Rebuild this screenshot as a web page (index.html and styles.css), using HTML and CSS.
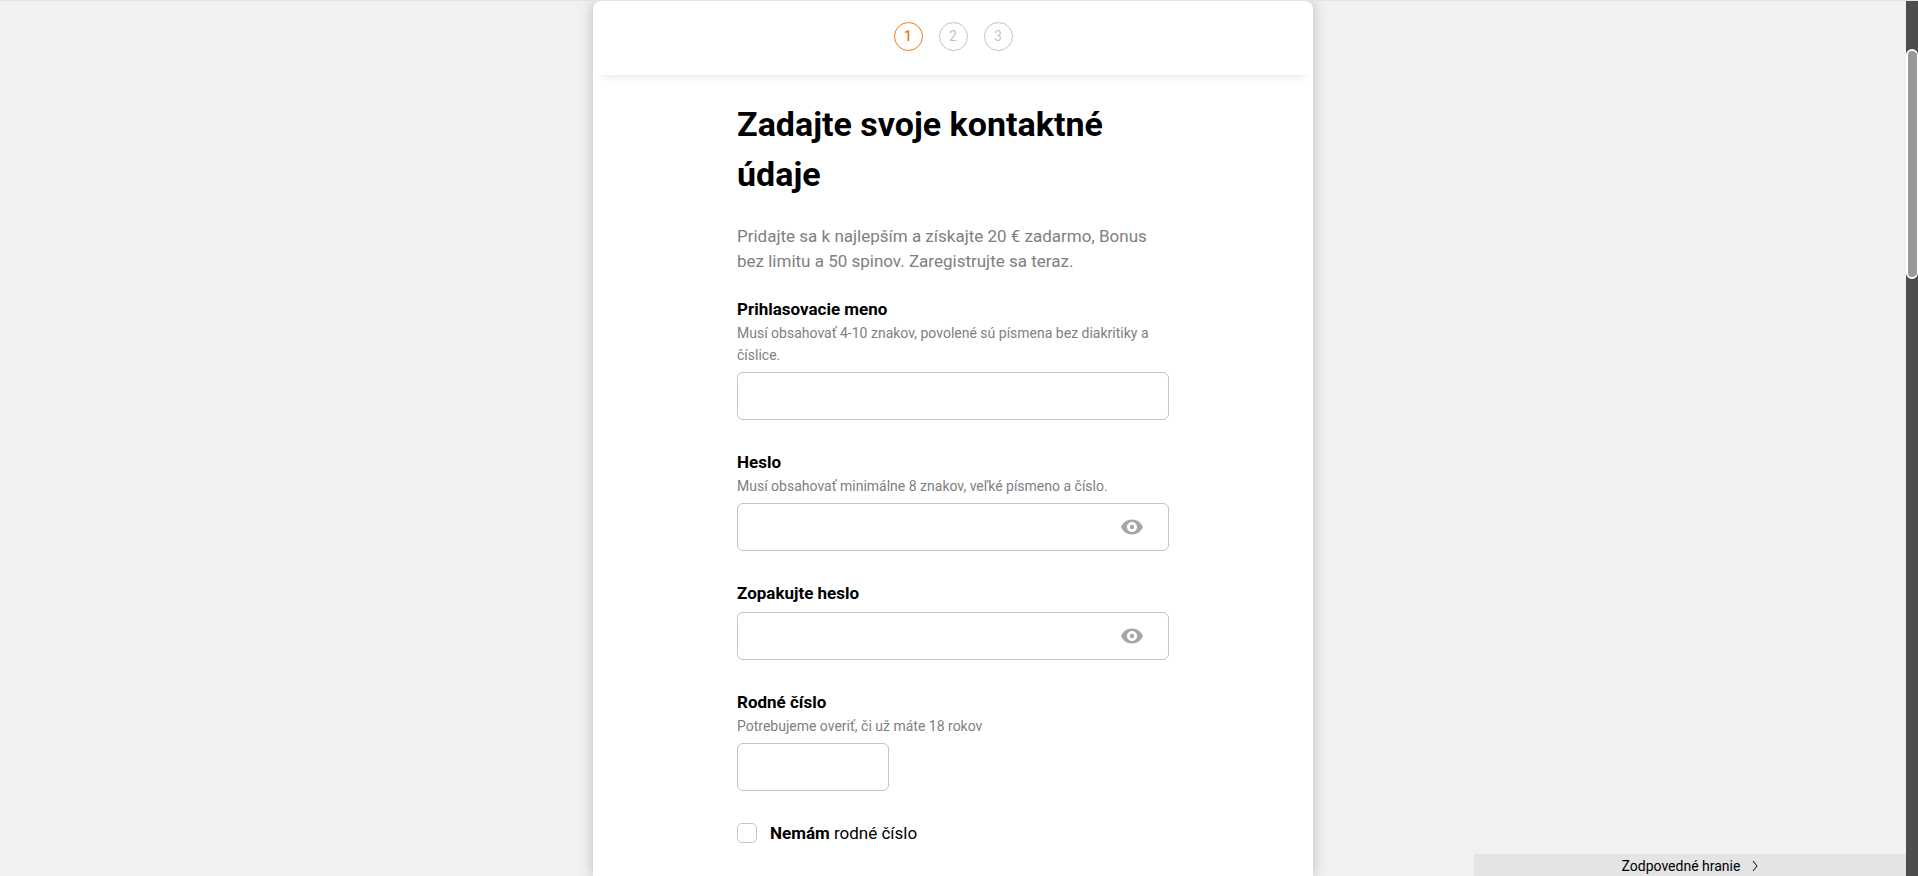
FILE: index.html
```html
<!DOCTYPE html>
<html lang="sk">
<head>
    <meta charset="UTF-8">
    <meta name="viewport" content="width=device-width, initial-scale=1.0">
    <title>Registrácia</title>
    <link rel="stylesheet" href="styles.css">
</head>
<body>

    <div class="page">
        <main class="content">
            <div class="card">
                <ol class="steps">
                    <li class="step active">1</li>
                    <li class="step">2</li>
                    <li class="step">3</li>
                </ol>

                <form class="form">
                    <h1>Zadajte svoje kontaktné údaje</h1>
                    <p class="intro">Pridajte sa k najlepším a získajte 20 € zadarmo, Bonus bez limitu a 50 spinov. Zaregistrujte sa teraz.</p>

                    <div class="field">
                        <label for="username">Prihlasovacie meno</label>
                        <p class="hint" id="username-hint">Musí obsahovať 4-10 znakov, povolené sú písmena bez diakritiky a číslice.</p>
                        <input type="text" class="input" id="username" aria-describedby="username-hint">
                    </div>

                    <div class="field">
                        <label for="password">Heslo</label>
                        <p class="hint" id="password-hint">Musí obsahovať minimálne 8 znakov, veľké písmeno a číslo.</p>
                        <div class="password">
                            <input type="password" class="input" id="password" aria-describedby="password-hint">
                            <button type="button" class="eye" aria-label="Zobraziť heslo">
                                <svg width="24" height="24" viewBox="0 0 24 24"><path d="M12 4.5C7 4.5 2.73 7.61 1 12c1.73 4.39 6 7.5 11 7.5s9.27-3.11 11-7.5c-1.73-4.39-6-7.5-11-7.5zM12 17c-2.76 0-5-2.24-5-5s2.24-5 5-5 5 2.24 5 5-2.24 5-5 5zm0-7.2a2.2 2.2 0 1 0 0 4.4 2.2 2.2 0 0 0 0-4.4z"/></svg>
                            </button>
                        </div>
                    </div>

                    <div class="field">
                        <label for="password2">Zopakujte heslo</label>
                        <div class="password">
                            <input type="password" class="input" id="password2">
                            <button type="button" class="eye" aria-label="Zobraziť heslo">
                                <svg width="24" height="24" viewBox="0 0 24 24"><path d="M12 4.5C7 4.5 2.73 7.61 1 12c1.73 4.39 6 7.5 11 7.5s9.27-3.11 11-7.5c-1.73-4.39-6-7.5-11-7.5zM12 17c-2.76 0-5-2.24-5-5s2.24-5 5-5 5 2.24 5 5-2.24 5-5 5zm0-7.2a2.2 2.2 0 1 0 0 4.4 2.2 2.2 0 0 0 0-4.4z"/></svg>
                            </button>
                        </div>
                    </div>

                    <div class="field">
                        <label for="birth-number">Rodné číslo</label>
                        <p class="hint" id="birth-hint">Potrebujeme overiť, či už máte 18 rokov</p>
                        <input type="text" class="input short" id="birth-number" aria-describedby="birth-hint">
                    </div>

                    <div class="check">
                        <input type="checkbox" id="no-number">
                        <label for="no-number"><strong>Nemám</strong> rodné číslo</label>
                    </div>
                </form>
            </div>

            <button type="button" class="responsible">
                Zodpovedné hranie
                <svg width="6" height="12" viewBox="0 0 6 12"><path d="M1 1l4 5-4 5"/></svg>
            </button>
        </main>

        <div class="scrollbar">
            <div class="thumb"></div>
        </div>
    </div>

</body>
</html>
```

FILE: styles.css
```css
* {
    box-sizing: border-box;
}
body {
    margin: 0;
    font-family: Roboto, sans-serif;
    font-size: 17px;
    color: #000;
    background-color: #f1f1f1;
}
h1, p {
    margin: 0;
}
.page {
    display: flex;
    height: 100vh;
    overflow: hidden;
    border-top: 1px solid #f3dcdc;
}
.content {
    position: relative;
    flex: 1;
    padding: 0 20px;
    overflow: hidden;
}
.card {
    max-width: 720px;
    min-height: 100vh;
    margin: 0 auto;
    background-color: #fff;
    border-radius: 8px 8px 0 0;
    box-shadow: 0 0 14px rgba(0, 0, 0, 0.22);
}

/* steps */
.steps {
    display: flex;
    justify-content: center;
    gap: 16px;
    margin: 0;
    padding: 21px 0 24px;
    list-style: none;
    border-radius: 8px;
    box-shadow: 0 9px 9px -9px rgba(0, 0, 0, 0.14);
}
.step {
    width: 29px;
    height: 29px;
    border: 1px solid #c4c4c4;
    border-radius: 50%;
    color: #c4c4c4;
    font-size: 14px;
    line-height: 27px;
    text-align: center;
}
.step.active {
    border-color: #ee7a10;
    color: #ee7a10;
    font-weight: 500;
}

/* form */
.form {
    width: 60%;
    margin: 0 auto;
    padding: 24px 0;
}
h1 {
    font-size: 34px;
    line-height: 50px;
    font-weight: 700;
    margin-bottom: 25px;
}
.intro {
    color: #808080;
    line-height: 25px;
    margin-bottom: 24px;
}
.field {
    margin-bottom: 31px;
}
.field label {
    display: block;
    font-weight: 700;
    line-height: 22px;
    padding-bottom: 2px;
}
.hint {
    color: #808080;
    font-size: 14px;
    line-height: 22px;
}
.input {
    display: block;
    width: 100%;
    height: 48px;
    margin-top: 6px;
    padding: 0 16px;
    border: 1px solid #c4c4c4;
    border-radius: 6px;
    background-color: #fff;
    font: inherit;
}
.input.short {
    width: 152px;
}
.password {
    position: relative;
}
.eye {
    position: absolute;
    top: 0;
    right: 25px;
    height: 48px;
    padding: 0;
    border: none;
    background: none;
    cursor: pointer;
}
.eye svg {
    display: block;
    fill: #a6a6a6;
}
.check {
    display: flex;
    align-items: center;
    gap: 13px;
    line-height: 22px;
}
.check input {
    appearance: none;
    width: 20px;
    height: 20px;
    margin: 0;
    border: 1px solid #c4c4c4;
    border-radius: 5px;
}

/* panel over the bottom right corner */
.responsible {
    position: absolute;
    right: 0;
    bottom: 0;
    display: flex;
    justify-content: center;
    align-items: center;
    gap: 12px;
    width: 432px;
    height: 22px;
    padding: 2px 0 0;
    border: none;
    background-color: #e4e4e4;
    color: #000;
    font: inherit;
    font-size: 14px;
}
.responsible svg {
    fill: none;
    stroke: #000;
}

.scrollbar {
    width: 12px;
    padding-top: 48px;
    background-color: #4d4d4d;
}
.thumb {
    height: 230px;
    border: 2px solid #fff;
    border-right-width: 1px;
    border-radius: 6px;
    background-color: #999;
}
```
